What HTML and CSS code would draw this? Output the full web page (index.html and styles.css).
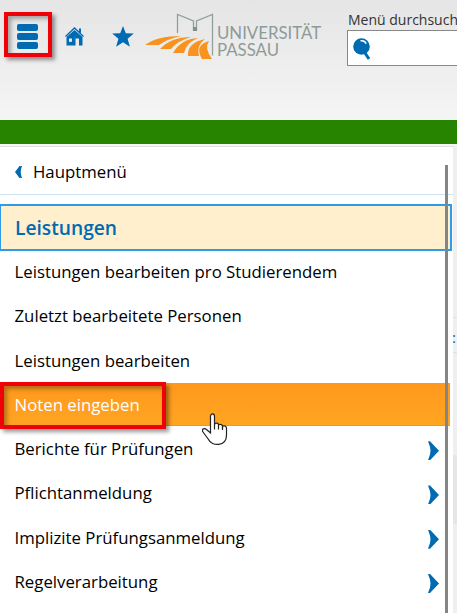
FILE: index.html
```html
<!DOCTYPE html>
<html lang="de">

<head>
    <meta charset="UTF-8">
    <meta name="viewport" content="width=device-width, initial-scale=1.0">
    <title>Universität Passau - Leistungen</title>
    <link rel="stylesheet" href="styles.css">
</head>

<body>
    <header class="header">
        <button class="menu-btn marked" aria-label="Menü">
            <span class="bar"></span>
            <span class="bar"></span>
            <span class="bar"></span>
        </button>
        <a class="home" href="#" aria-label="Startseite">
            <svg width="20" height="20" viewBox="0 0 20 20">
                <path d="M.5 9.500 9.500 1 18.500 9.500" fill="none" stroke="#006ab3" stroke-width="1.300" />
                <path d="M1.500 10 9.500 2.900l8 7.100V18.500h-3.500v-7h-3.500v7H1.500z" fill="#006ab3" />
                <path d="M14 1.500h2v5l-2-1.900z" fill="#006ab3" />
                <path d="M4 11.500h3v3.300H4z" fill="#ececec" />
            </svg>
        </a>
        <a class="favorites" href="#" aria-label="Favoriten">
            <svg width="22" height="21" viewBox="0 0 22 21">
                <path d="M11 0l2.800 7.200 8 .4-6.200 5.100 2.300 8L11 16.200l-6.900 4.500 2.300-8L.2 7.600l8-.4z" fill="#006ab3" />
            </svg>
        </a>
        <div class="logo">
            <svg class="logo-mark" width="72" height="48" viewBox="0 0 72 48">
                <path d="M32.500 20V1.500L48.500 8v9h3V8l16-6.500v41" fill="none" stroke="#92a09d" stroke-width="1.300" />
                <path d="M48 14h4v4h-4z" fill="#82908d" />
                <path d="M0 32Q12 23 36 23Q22 26 14 32z" fill="#f7931e" />
                <path d="M15 36Q26 24 46 24Q32 28 26 36z" fill="#f7931e" />
                <path d="M28 40Q36 26 53 25Q41 30 39 40z" fill="#f7931e" />
                <path d="M43 43Q42 30 60 26Q51 33 54 43z" fill="#f7931e" />
                <path d="M57 46Q49 32 64 28Q59 35 67 46z" fill="#f7931e" />
            </svg>
            <div class="logo-text">
                <span>UNIVERSITÄT</span>
                <span>PASSAU</span>
            </div>
        </div>
        <div class="search">
            <label class="search-label" for="search">Menü durchsuchen</label>
            <div class="search-box">
                <svg width="18" height="22" viewBox="0 0 18 22">
                    <circle cx="8.500" cy="8.500" r="8.300" fill="#006ab3" />
                    <path d="M12 15l4 6" stroke="#006ab3" stroke-width="3" />
                    <path d="M7.500 2.800c3-.5 5 .8 5.600 3" fill="none" stroke="#fff" stroke-width="1.400" />
                </svg>
                <input type="text" id="search">
            </div>
        </div>
    </header>
    <div class="green-bar"></div>

    <main class="content">
        <nav class="menu">
            <a class="back" href="#">
                <svg width="7" height="12" viewBox="0 0 7 12">
                    <path d="M4.500 0H7Q4.500 6 7 12H4.500L0 6z" fill="#006ab3" />
                </svg>
                Hauptmenü
            </a>
            <h2 class="menu-title">Leistungen</h2>
            <ul class="menu-list">
                <li>Leistungen bearbeiten pro Studierendem</li>
                <li>Zuletzt bearbeitete Personen</li>
                <li>Leistungen bearbeiten</li>
                <li class="active">Noten eingeben</li>
                <li class="sub">Berichte für Prüfungen</li>
                <li class="sub">Pflichtanmeldung</li>
                <li class="sub">Implizite Prüfungsanmeldung</li>
                <li class="sub">Regelverarbeitung</li>
            </ul>
            <div class="scrollbar"></div>
            <div class="item-mark marked"></div>
            <svg class="cursor" width="26" height="33" viewBox="0 0 26 33">
                <path d="M8.500 20V3.500C8.500 0 12.500 0 12.500 3.500V12c0-2.500 4-2.500 4 0v1c0-2.500 4-2.200 4 .4v1c0-2.400 4-2 4 .8V22c0 12-15 11.500-18 4.500L1 19c-2-3 1.500-4.500 3.500-2.500z" fill="#fff" stroke="#222" stroke-width="1.200" />
                <path d="M12.500 12v4.500M16.500 12.500v4M20.500 14v3" stroke="#222" stroke-width="1.200" />
            </svg>
        </nav>
        <div class="page">
            <div class="page-row">:</div>
            <div class="page-block"></div>
        </div>
    </main>
</body>

</html>
```
FILE: styles.css
```css
* {
    box-sizing: border-box;
}

body {
    margin: 0;
    height: 613px;
    overflow: hidden;
    font-family: "Open Sans", "Noto Sans", sans-serif;
    font-size: 16.8px;
    color: #000;
    background-color: #fff;
}

svg {
    display: block;
    flex: none;
}

.header {
    display: flex;
    align-items: flex-start;
    height: 120px;
    padding-left: 4px;
    background: linear-gradient(to bottom, #e5e5e5, #f5f5f5);
    overflow: hidden;
}

.marked {
    border: 4px solid #f00009;
    box-shadow: 3px 3px 4px rgba(0, 0, 0, 0.4), inset 3px 3px 4px rgba(0, 0, 0, 0.3);
}

.menu-btn {
    display: flex;
    flex: none;
    flex-direction: column;
    justify-content: flex-start;
    gap: 2px;
    width: 48px;
    height: 45px;
    margin-top: 12px;
    padding: 8px 10px 0 9px;
    background: none;
}

.bar {
    flex: none;
    width: 21px;
    height: 7px;
    border-radius: 2px;
    background-color: #006ab3;
}

.home {
    margin: 27px 0 0 13px;
}

.favorites {
    margin: 26px 0 0 27px;
}

.logo {
    display: flex;
    flex: none;
    width: 202px;
    margin: 13px 0 0 11px;
}

.logo-text {
    margin: 11px 0 0 0;
    font-family: Lato, sans-serif;
    font-size: 16.8px;
    line-height: 17px;
    color: #8d9b98;
}

.logo-text span {
    display: block;
}

.search {
    flex: none;
    width: 180px;
    padding-top: 10px;
}

.search-label {
    display: block;
    padding-left: 1px;
    font-size: 14px;
    line-height: 20px;
    color: #333;
}

.search-box {
    display: flex;
    height: 36px;
    padding: 7px 5px;
    border: 1px solid #888;
    background-color: #fff;
}

.search-box input {
    width: 100px;
    border: none;
}

.green-bar {
    height: 24px;
    background-color: #278400;
}

.content {
    display: flex;
    height: 469px;
    padding-top: 2px;
    background-color: #f5f5f5;
}

.menu {
    position: relative;
    width: 453px;
    border-top: 1px solid #e1e1e1;
    background-color: #fff;
}

.back {
    display: flex;
    align-items: center;
    gap: 11px;
    height: 48px;
    padding: 2px 0 0 15px;
    border-bottom: 1px solid #cde3f1;
    color: #000;
    text-decoration: none;
}

.menu-title {
    width: 453px;
    height: 47px;
    margin: 9px 0 0 -1px;
    padding-left: 14px;
    border: 2px solid #2f9be8;
    background-color: #ffefcd;
    font-size: 19.2px;
    font-weight: 600;
    line-height: 43px;
    color: #006ab3;
}

.menu-list {
    margin: -1px 0 0;
    padding: 0;
    list-style: none;
}

.menu-list li {
    display: flex;
    align-items: center;
    justify-content: space-between;
    width: 450px;
    height: 43px;
    margin-bottom: 1.3px;
    padding: 0 11px 0 14.5px;
}

.menu-list .active {
    background: linear-gradient(to bottom, #ff981d, #ffa521);
    border-bottom: 1px solid #f39423;
    padding-top: 1px;
    color: #fff;
}

.menu-list .sub::after {
    content: "";
    width: 11px;
    height: 19px;
    margin-top: 4px;
    background-color: #006ab3;
    clip-path: polygon(0 0, 2px 0, 100% 50%, 2px 100%, 0 100%, 2px 70%, 2.5px 50%, 2px 30%);
}

.scrollbar {
    position: absolute;
    top: 18px;
    left: 445px;
    width: 3px;
    height: 448px;
    background-color: #858585;
}

.item-mark {
    position: absolute;
    top: 235px;
    left: 0;
    width: 166px;
    height: 47px;
}

.cursor {
    position: absolute;
    top: 266px;
    left: 202px;
}

.page {
    width: 4px;
    padding-top: 171px;
    overflow: hidden;
    background-color: #efefef;
}

.page-row {
    height: 36px;
    border: 1px solid #d3e3e6;
    border-width: 1px 0;
    font-size: 15px;
    line-height: 38px;
    text-indent: -1px;
    color: #17609c;
}

.page-block {
    height: 69px;
    margin-top: 102px;
    background-color: #e8e5e7;
}
```
